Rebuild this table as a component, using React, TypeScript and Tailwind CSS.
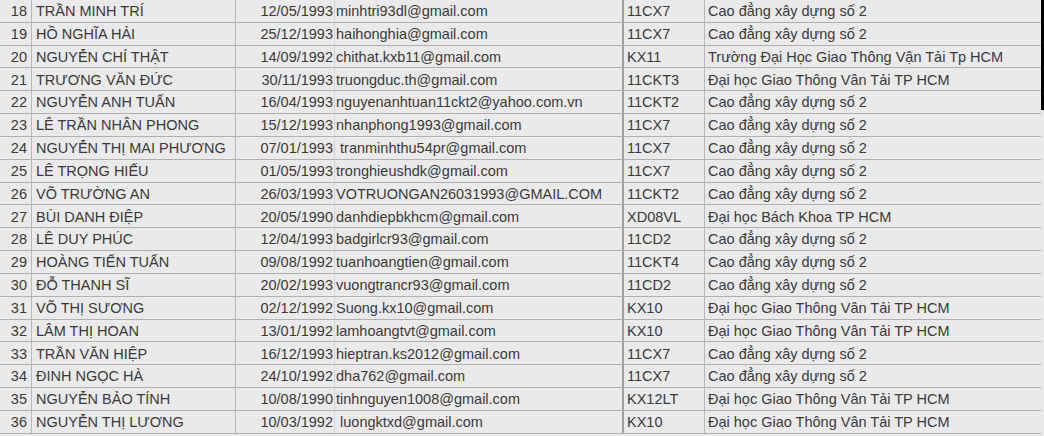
import React from "react";

type Row = [string, string, string, string, string, string];

const rows: Row[] = [
  ["18", "TRẦN MINH TRÍ", "12/05/1993", "minhtri93dl@gmail.com", "11CX7", "Cao đẳng xây dựng số 2"],
  ["19", "HỒ NGHĨA HẢI", "25/12/1993", "haihonghia@gmail.com", "11CX7", "Cao đẳng xây dựng số 2"],
  ["20", "NGUYỄN CHÍ THẬT", "14/09/1992", "chithat.kxb11@gmail.com", "KX11", "Trường Đại Học Giao Thông Vận Tải Tp HCM"],
  ["21", "TRƯƠNG VĂN ĐỨC", "30/11/1993", "truongduc.th@gmail.com", "11CKT3", "Đại học Giao Thông Vân Tải TP HCM"],
  ["22", "NGUYỄN ANH TUẤN", "16/04/1993", "nguyenanhtuan11ckt2@yahoo.com.vn", "11CKT2", "Cao đẳng xây dựng số 2"],
  ["23", "LÊ TRẦN NHÂN PHONG", "15/12/1993", "nhanphong1993@gmail.com", "11CX7", "Cao đẳng xây dựng số 2"],
  ["24", "NGUYỄN THỊ MAI PHƯƠNG", "07/01/1993", "\u00a0tranminhthu54pr@gmail.com", "11CX7", "Cao đẳng xây dựng số 2"],
  ["25", "LÊ TRỌNG HIẾU", "01/05/1993", "tronghieushdk@gmail.com", "11CX7", "Cao đẳng xây dựng số 2"],
  ["26", "VÕ TRƯỜNG AN", "26/03/1993", "VOTRUONGAN26031993@GMAIL.COM", "11CKT2", "Cao đẳng xây dựng số 2"],
  ["27", "BÙI DANH ĐIỆP", "20/05/1990", "danhdiepbkhcm@gmail.com", "XD08VL", "Đại học Bách Khoa TP HCM"],
  ["28", "LÊ DUY PHÚC", "12/04/1993", "badgirlcr93@gmail.com", "11CD2", "Cao đẳng xây dựng số 2"],
  ["29", "HOÀNG TIẾN TUẤN", "09/08/1992", "tuanhoangtien@gmail.com", "11CKT4", "Cao đẳng xây dựng số 2"],
  ["30", "ĐỖ THANH SĨ", "20/02/1993", "vuongtrancr93@gmail.com", "11CD2", "Cao đẳng xây dựng số 2"],
  ["31", "VÕ THỊ SƯƠNG", "02/12/1992", "Suong.kx10@gmail.com", "KX10", "Đại học Giao Thông Vân Tải TP HCM"],
  ["32", "LÂM THỊ HOAN", "13/01/1992", "lamhoangtvt@gmail.com", "KX10", "Đại học Giao Thông Vân Tải TP HCM"],
  ["33", "TRẦN VĂN HIỆP", "16/12/1993", "hieptran.ks2012@gmail.com", "11CX7", "Cao đẳng xây dựng số 2"],
  ["34", "ĐINH NGỌC HÀ", "24/10/1992", "dha762@gmail.com", "11CX7", "Cao đẳng xây dựng số 2"],
  ["35", "NGUYỄN BẢO TÍNH", "10/08/1990", "tinhnguyen1008@gmail.com", "KX12LT", "Đại học Giao Thông Vân Tải TP HCM"],
  ["36", "NGUYỄN THỊ LƯƠNG", "10/03/1992", "\u00a0luongktxd@gmail.com", "KX10", "Đại học Giao Thông Vân Tải TP HCM"],
];

export default function App() {
  return (
    <div className="w-[1044px] h-[436px] overflow-hidden bg-[#eaeaea] flex font-['Liberation_Sans',Arial,sans-serif] text-[14.5px] text-[#3a3a3a]">
      <div className="w-[1041px] flex flex-col">
        {rows.map((r) => (
          <div
            key={r[0]}
            className="h-[22.83px] shrink-0 grid grid-cols-[32px_204px_99px_289px_81px_1fr] border-b border-[#b0b0b0] leading-none"
          >
            <div className="flex items-center justify-end pr-[4px] pt-px border-r border-[#b8b8b8]">{r[0]}</div>
            <div className="flex items-center pl-[4px] pt-px border-r border-[#b8b8b8] whitespace-nowrap overflow-hidden">{r[1]}</div>
            <div className="flex items-center justify-end pr-[1px] pt-px border-r border-[#d6d6d6]">{r[2]}</div>
            <div className="flex items-center pl-[1px] pt-px border-r-2 border-[#a0a0a0] whitespace-nowrap overflow-hidden">{r[3]}</div>
            <div className="flex items-center pl-[3px] pt-px border-r border-[#b8b8b8]">{r[4]}</div>
            <div className="flex items-center pl-[3px] pt-px whitespace-nowrap overflow-hidden">{r[5]}</div>
          </div>
        ))}
      </div>
      <div className="w-[3px] flex flex-col">
        <div className="h-[110px] bg-black" />
      </div>
    </div>
  );
}
